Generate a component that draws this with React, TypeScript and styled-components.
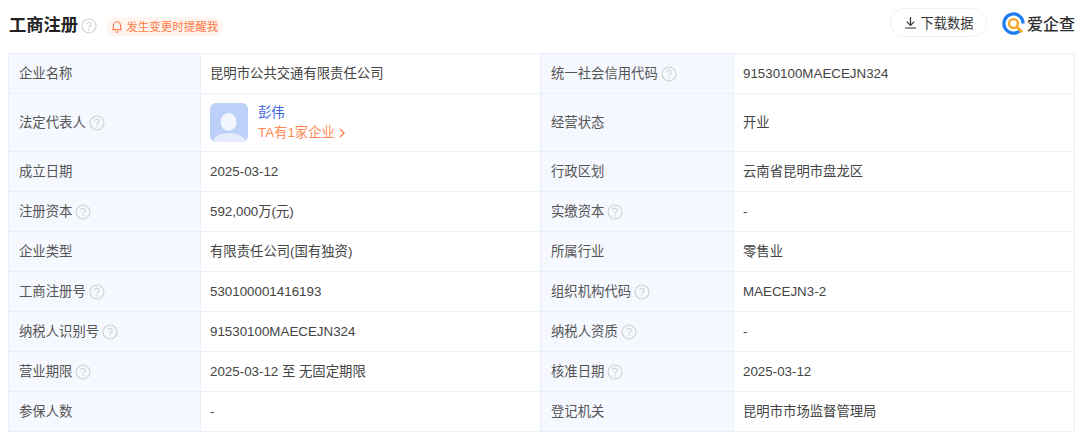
import React from "react";
import styled, { createGlobalStyle } from "styled-components";

const GlobalStyle = createGlobalStyle`
  html, body {
    margin: 0;
    padding: 0;
    background: #fff;
  }
  body {
    font-family: "Liberation Sans", "Noto Sans CJK SC", sans-serif;
  }
`;

const Help = () => (
  <HelpIcon viewBox="0 0 16 16">
    <circle cx="8" cy="8" r="7" fill="none" stroke="#d2d2d2" strokeWidth="1.2" />
    <path d="M5.9 6.3a2.1 2.1 0 1 1 3.3 1.7c-.8.5-1.2.9-1.2 1.8" fill="none" stroke="#d2d2d2" strokeWidth="1.2" />
    <circle cx="8" cy="11.8" r=".8" fill="#d2d2d2" />
  </HelpIcon>
);

const rows = [
  ["企业名称", false, "昆明市公共交通有限责任公司", "统一社会信用代码", true, "91530100MAECEJN324"],
  ["法定代表人", true, null, "经营状态", false, "开业"],
  ["成立日期", false, "2025-03-12", "行政区划", false, "云南省昆明市盘龙区"],
  ["注册资本", true, "592,000万(元)", "实缴资本", true, "-"],
  ["企业类型", false, "有限责任公司(国有独资)", "所属行业", false, "零售业"],
  ["工商注册号", true, "530100001416193", "组织机构代码", true, "MAECEJN3-2"],
  ["纳税人识别号", true, "91530100MAECEJN324", "纳税人资质", true, "-"],
  ["营业期限", true, "2025-03-12 至 无固定期限", "核准日期", true, "2025-03-12"],
  ["参保人数", false, "-", "登记机关", false, "昆明市市场监督管理局"],
] as const;

const hasCjk = (text: string | null) => !!text && /[\u4e00-\u9fff]/.test(text);

const App = () => (
  <Page>
    <GlobalStyle />
    <Header>
      <TitleGroup>
        <Title>工商注册</Title>
        <TitleHelp>
          <Help />
        </TitleHelp>
        <Notice>
          <svg width="12" height="13" viewBox="0 0 12 13" fill="none" stroke="#ff7a45" strokeWidth="1.1">
            <path d="M1.2 9.6h9.6M2.4 9.6V5.4a3.6 3.6 0 0 1 7.2 0v4.2" />
            <path d="M4.6 11.6c.8.6 2 .6 2.8 0" />
          </svg>
          发生变更时提醒我
        </Notice>
      </TitleGroup>
      <Actions>
        <DownloadButton>
          <svg width="13" height="13" viewBox="0 0 13 13" fill="none" stroke="#333" strokeWidth="1.2">
            <path d="M6.5 1v8M2.8 5.6l3.7 3.7 3.7-3.7M1 12h11" />
          </svg>
          下载数据
        </DownloadButton>
        <Logo>
          <svg width="23" height="23" viewBox="0 0 24 24" fill="none">
            <path d="M19 19.2A10 10 0 1 1 22 12" stroke="#1e7cf0" strokeWidth="3.4" />
            <circle cx="12" cy="12" r="4.6" stroke="#f5a623" strokeWidth="2.4" />
            <path d="M15.5 15.5l5.6 5.6" stroke="#f5a623" strokeWidth="2.8" />
          </svg>
          <LogoText>爱企查</LogoText>
        </Logo>
      </Actions>
    </Header>
    <Table>
      {rows.map((row, i) => (
        <React.Fragment key={i}>
          <LabelCell>
            {row[0]}
            {row[1] && <Help />}
          </LabelCell>
          <ValueCell $raised={hasCjk(row[2])}>
            {row[2] ?? (
              <Person>
                <Avatar>
                  <svg width="38" height="39" viewBox="0 0 38 39">
                    <ellipse cx="18.5" cy="19" rx="8" ry="9" fill="#f2f6fe" />
                    <path d="M3 39c1-6 8-9 15.5-9S35 33 36 39z" fill="#e4ecfb" />
                  </svg>
                </Avatar>
                <PersonText>
                  <PersonName>彭伟</PersonName>
                  <PersonLink>
                    TA有1家企业
                    <svg width="8" height="10" viewBox="0 0 8 10" fill="none" stroke="#ff7a45" strokeWidth="1.3">
                      <path d="M2 1l4 4-4 4" />
                    </svg>
                  </PersonLink>
                </PersonText>
              </Person>
            )}
          </ValueCell>
          <LabelCell>
            {row[3]}
            {row[4] && <Help />}
          </LabelCell>
          <ValueCell $raised={hasCjk(row[5])}>{row[5]}</ValueCell>
        </React.Fragment>
      ))}
    </Table>
  </Page>
);

export default App;

const Page = styled.div`
  width: 1080px;
  height: 432px;
  overflow: hidden;
  padding: 8px 5px 0 8px;
  box-sizing: border-box;
`;

const Header = styled.div`
  height: 45px;
  display: flex;
  justify-content: space-between;
  align-items: flex-start;
`;

const TitleGroup = styled.div`
  display: flex;
  align-items: center;
  height: 28px;
  margin-top: 1px;
  margin-left: 1px;
`;

const Title = styled.h1`
  margin: 0;
  font-size: 17.3px;
  font-weight: 700;
  color: #222;
`;

const TitleHelp = styled.span`
  display: flex;
  margin-left: 3px;
  margin-top: 2px;
  & svg {
    width: 16px;
    height: 16px;
  }
`;

const Notice = styled.span`
  display: flex;
  align-items: center;
  gap: 3px;
  height: 19px;
  margin-left: 9px;
  margin-top: 6px;
  padding: 0 5px;
  font-size: 11.5px;
  color: #ff7a45;
  background: #fff5f0;
  border-radius: 10px;
`;

const Actions = styled.div`
  display: flex;
  align-items: center;
  height: 30px;
`;

const DownloadButton = styled.button`
  display: flex;
  align-items: center;
  justify-content: center;
  gap: 4px;
  width: 97px;
  height: 29px;
  margin-bottom: 1px;
  padding: 0 0 1px;
  border: 1px solid #eef1f8;
  border-radius: 15px;
  background: #fff;
  font: inherit;
  font-size: 13.2px;
  color: #333;
`;

const Logo = styled.div`
  display: flex;
  align-items: center;
  margin-left: 15px;
`;

const LogoText = styled.span`
  font-size: 16px;
  font-weight: 500;
  color: #2e2e2e;
  white-space: nowrap;
  margin-left: 2px;
`;

const Table = styled.div`
  display: grid;
  grid-template-columns: 192px 340px 193px 341px;
  grid-template-rows: 40px 58px repeat(7, 40px);
  width: 1066px;
  border-top: 1px solid #e9f0fb;
  border-left: 1px solid #e9f0fb;
  box-sizing: border-box;
`;

const LabelCell = styled.div`
  display: flex;
  align-items: center;
  gap: 3px;
  padding-left: 10px;
  padding-bottom: 3px;
  box-sizing: border-box;
  background: #f5f8ff;
  border-right: 1px solid #e9f0fb;
  border-bottom: 1px solid #e9f0fb;
  font-size: 13.35px;
  color: #555;
`;

const ValueCell = styled.div<{ $raised?: boolean }>`
  display: flex;
  align-items: center;
  padding-left: 9px;
  padding-bottom: ${(p) => (p.$raised ? "2px" : "0")};
  box-sizing: border-box;
  border-right: 1px solid #e9f0fb;
  border-bottom: 1px solid #e9f0fb;
  font-size: 13.35px;
  color: #444;
`;

const HelpIcon = styled.svg`
  width: 16px;
  height: 16px;
  flex: none;
  margin-top: 3px;
`;

const Person = styled.div`
  display: flex;
  align-items: center;
  gap: 10px;
`;

const Avatar = styled.div`
  width: 38px;
  height: 39px;
  border-radius: 6px;
  overflow: hidden;
  background: #bcd0f8;
  & svg {
    display: block;
  }
`;

const PersonText = styled.div`
  display: flex;
  flex-direction: column;
  gap: 4px;
`;

const PersonName = styled.span`
  font-size: 13.35px;
  line-height: 16px;
  color: #3b62e0;
`;

const PersonLink = styled.span`
  display: flex;
  align-items: center;
  gap: 3px;
  font-size: 13.35px;
  line-height: 16px;
  color: #ff8a55;
`;
